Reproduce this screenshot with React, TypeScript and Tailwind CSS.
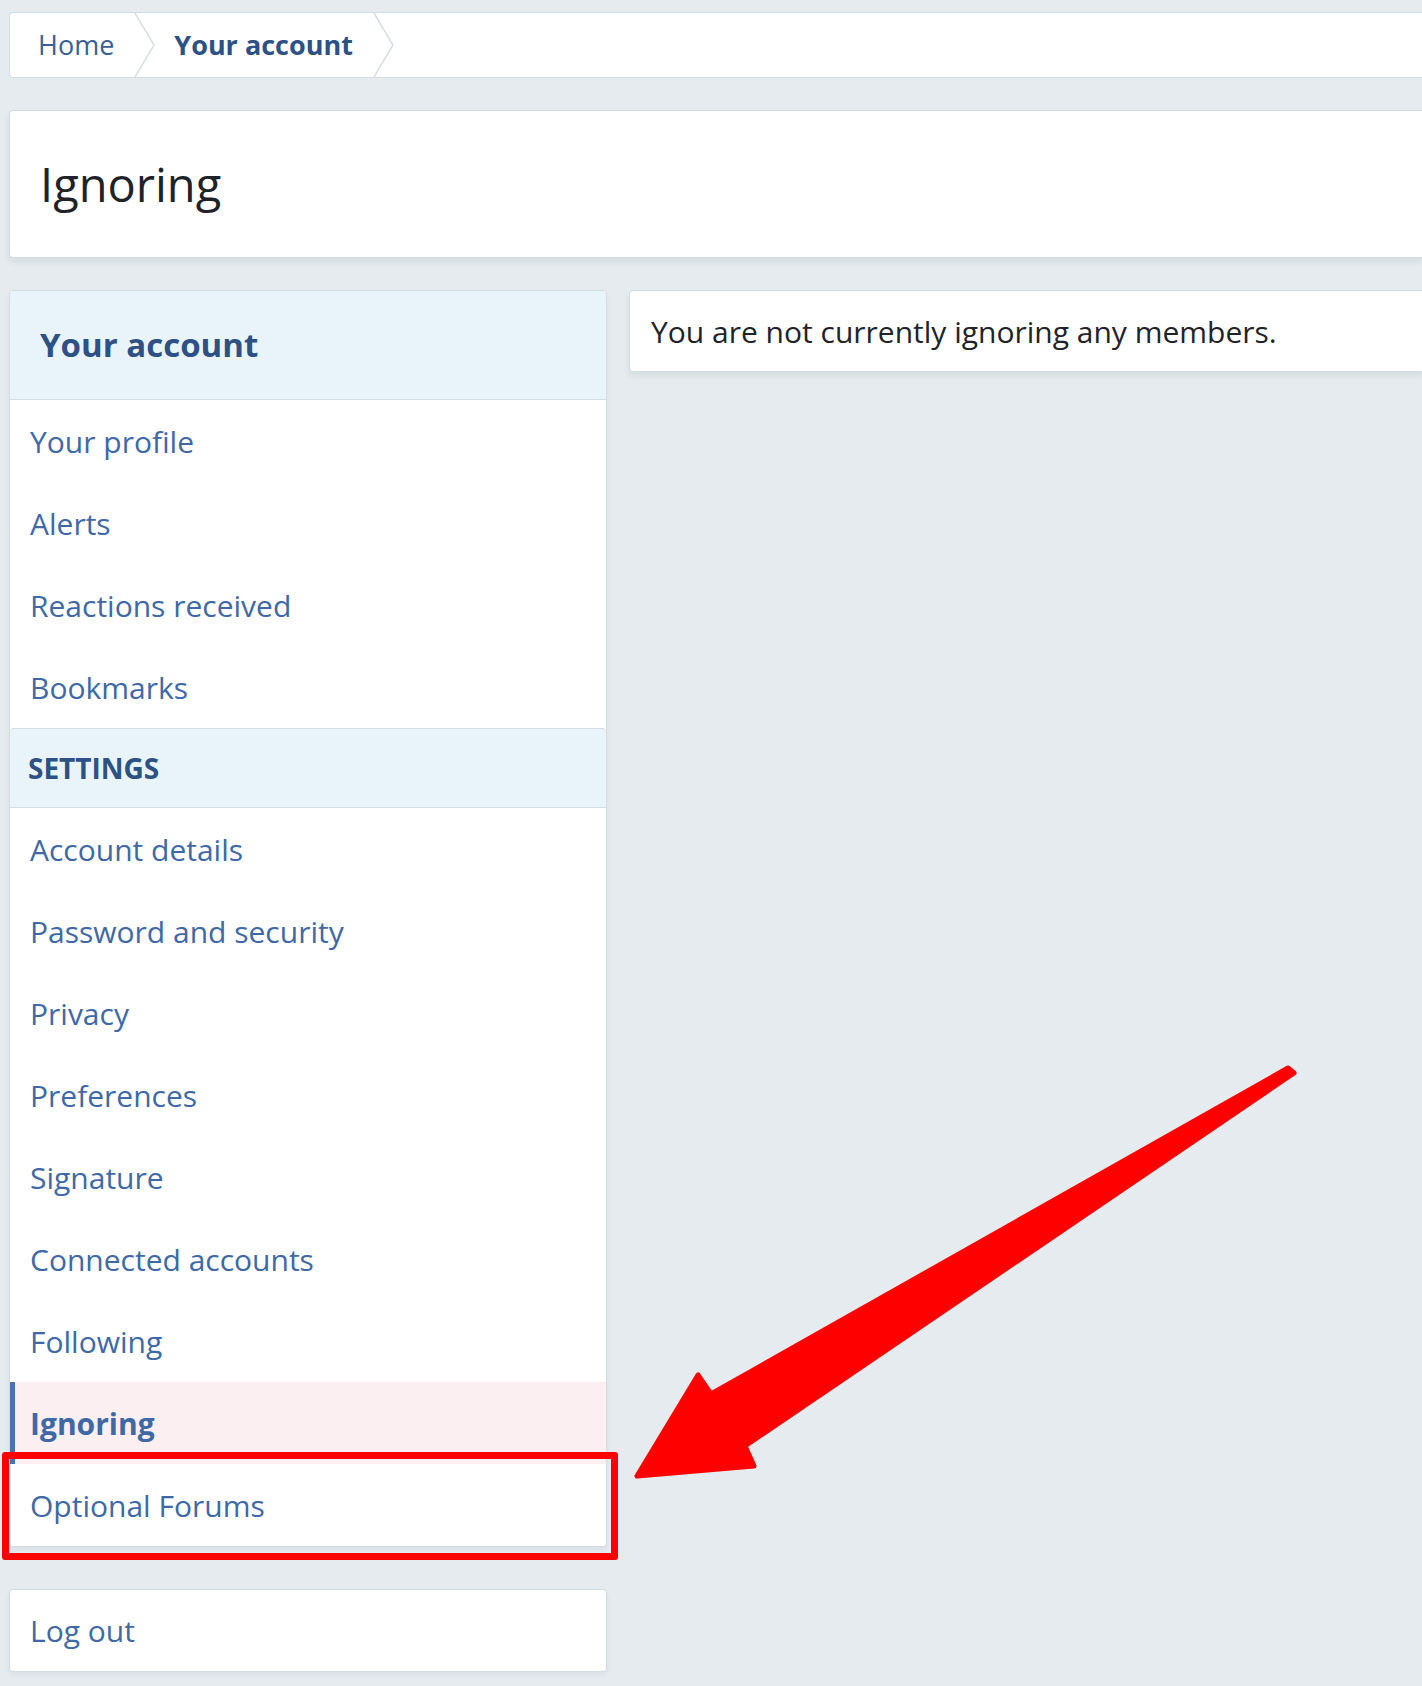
import React from "react";

const accountLinks = ["Your profile", "Alerts", "Reactions received", "Bookmarks"];
const settingsLinks = [
  "Account details",
  "Password and security",
  "Privacy",
  "Preferences",
  "Signature",
  "Connected accounts",
  "Following",
];

function Chevron() {
  return (
    <svg width="22" height="64" viewBox="0 0 22 64" className="shrink-0">
      <polyline points="1,0 20,32 1,64" fill="none" stroke="#d9dee3" strokeWidth="1.5" />
    </svg>
  );
}

function NavItem({ label }: { label: string }) {
  return (
    <a href="#" className="flex h-[82px] items-center pl-[20px] text-[30px] text-[#4068a6]">
      {label}
    </a>
  );
}

export default function App() {
  return (
    <div className="relative min-h-[1686px] w-full overflow-hidden bg-[#e5ebef] pl-[9px] pt-[12px] font-['Open_Sans',sans-serif]">
      {/* breadcrumb */}
      <nav className="flex h-[66px] items-center rounded-l-[4px] border border-r-0 border-[#d3dce3] bg-white">
        <a href="#" className="pl-[28px] pr-[20px] text-[27px] text-[#3a5f94]">Home</a>
        <Chevron />
        <a href="#" className="pl-[18px] pr-[20px] text-[27px] font-bold text-[#2d5184]">Your account</a>
        <Chevron />
      </nav>

      {/* title */}
      <div className="mt-[32px] flex h-[148px] items-center rounded-l-[4px] border border-r-0 border-[#d3dce3] bg-white pl-[30px] shadow-[0_4px_6px_rgba(30,50,70,0.08)]">
        <h1 className="text-[47px] text-[#1f2329]">Ignoring</h1>
      </div>

      <div className="mt-[32px] flex items-start gap-[22px]">
        <aside className="w-[598px] shrink-0">
          <div className="overflow-hidden rounded-[4px] border border-[#d3dce3] bg-white shadow-[0_3px_5px_rgba(30,50,70,0.06)]">
            <div className="flex h-[109px] items-center border-b border-[#d3dce3] bg-[#e9f3fa] pl-[30px]">
              <h2 className="text-[33px] font-bold text-[#2d5184]">Your account</h2>
            </div>
            {accountLinks.map((l) => (
              <NavItem key={l} label={l} />
            ))}
            <div className="flex h-[80px] items-center rounded-t-[4px] border-y border-[#d3dce3] bg-[#e9f3fa] pl-[18px]">
              <h3 className="text-[28px] font-bold uppercase text-[#2d5184]">Settings</h3>
            </div>
            {settingsLinks.map((l) => (
              <NavItem key={l} label={l} />
            ))}
            <a href="#" className="flex h-[82px] items-center border-l-[5px] border-[#4a72b0] bg-[#fbeff1] pl-[15px] text-[30px] font-bold text-[#4068a6]">
              Ignoring
            </a>
            <NavItem label="Optional Forums" />
          </div>

          <div className="mt-[42px] flex h-[83px] items-center rounded-[4px] border border-[#d3dce3] bg-white pl-[20px] shadow-[0_3px_5px_rgba(30,50,70,0.06)]">
            <a href="#" className="text-[30px] text-[#4068a6]">Log out</a>
          </div>
        </aside>

        <div className="flex h-[82px] flex-1 items-center rounded-l-[4px] border border-r-0 border-[#d3dce3] bg-white pl-[21px] shadow-[0_4px_6px_rgba(30,50,70,0.08)]">
          <p className="text-[30px] text-[#1f2329]">You are not currently ignoring any members.</p>
        </div>
      </div>

      {/* annotation: red frame */}
      <div className="pointer-events-none absolute left-[2px] top-[1452px] h-[108px] w-[616px] rounded-[3px] border-[7px] border-[#ff0000]" />

      {/* annotation: arrow */}
      <svg className="pointer-events-none absolute left-0 top-0" width="1422" height="1686" viewBox="0 0 1422 1686">
        <path
          d="M1288 1068 L711 1394 L698 1375 L637 1476 L754 1466 L745 1446 L1294 1073 Z"
          fill="#ff0000"
          stroke="#ff0000"
          strokeWidth="5"
          strokeLinejoin="round"
        />
      </svg>
    </div>
  );
}
